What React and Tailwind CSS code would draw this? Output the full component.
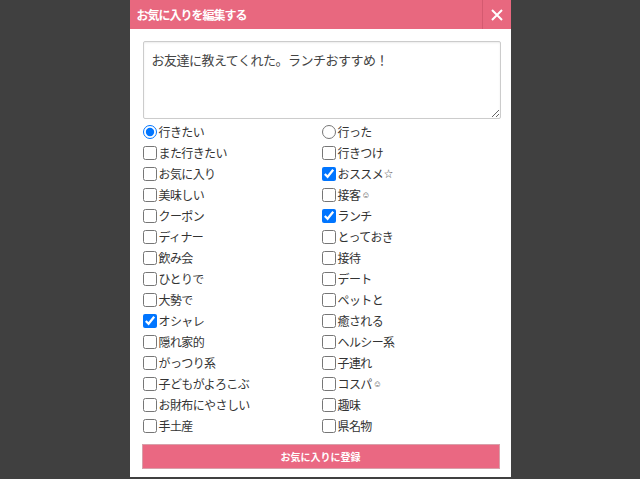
import React from "react";

const left = [
  ["radio", "行きたい", true],
  ["cb", "また行きたい", false],
  ["cb", "お気に入り", false],
  ["cb", "美味しい", false],
  ["cb", "クーポン", false],
  ["cb", "ディナー", false],
  ["cb", "飲み会", false],
  ["cb", "ひとりで", false],
  ["cb", "大勢で", false],
  ["cb", "オシャレ", true],
  ["cb", "隠れ家的", false],
  ["cb", "がっつり系", false],
  ["cb", "子どもがよろこぶ", false],
  ["cb", "お財布にやさしい", false],
  ["cb", "手土産", false],
];
const right = [
  ["radio", "行った", false],
  ["cb", "行きつけ", false],
  ["cb", "おススメ☆", true],
  ["cb", "接客☺", false],
  ["cb", "ランチ", true],
  ["cb", "とっておき", false],
  ["cb", "接待", false],
  ["cb", "デート", false],
  ["cb", "ペットと", false],
  ["cb", "癒される", false],
  ["cb", "ヘルシー系", false],
  ["cb", "子連れ", false],
  ["cb", "コスパ☺", false],
  ["cb", "趣味", false],
  ["cb", "県名物", false],
];

function Item({ type, label, checked }) {
  const isIcon = label.endsWith("☆") || label.endsWith("☺");
  const main = isIcon ? label.slice(0, -1) : label;
  const icon = isIcon ? label.slice(-1) : null;
  return (
    <label className="flex items-center h-[21px] text-[12px] tracking-[-0.6px] text-[#333] leading-none">
      <input
        type={type === "radio" ? "radio" : "checkbox"}
        name={type === "radio" ? "visit" : undefined}
        defaultChecked={checked}
        className="m-0 mr-[2px] w-[14px] h-[14px] shrink-0"
      />
      <span>{main}</span>
      {icon && <span className="text-[9px] ml-px text-[#555]">{icon}</span>}
    </label>
  );
}

export default function App() {
  return (
    <div
      className="w-[640px] h-[479px] bg-[#404040] flex justify-center overflow-hidden"
      style={{ fontFamily: '"Noto Sans CJK JP", "Noto Sans", sans-serif' }}
    >
      <div className="w-[381px] h-[477px] bg-white flex flex-col">
        <div className="h-[29px] bg-[#e8687f] flex items-center">
          <div className="flex-1 pl-[7px] text-white text-[12px] tracking-[-1px] font-bold">お気に入りを編集する</div>
          <div className="w-[29px] h-[29px] border-l border-[#d45a70] flex items-center justify-center">
            <svg width="14" height="14" viewBox="0 0 14 14">
              <path d="M2 2L12 12M12 2L2 12" stroke="white" strokeWidth="2" />
            </svg>
          </div>
        </div>
        <div className="pl-[13px] pr-[10px] pt-[12px]">
          <textarea
            defaultValue="お友達に教えてくれた。ランチおすすめ！"
            className="block w-[358px] h-[78px] border border-[#ccc] rounded-[2px] shadow-[inset_0_1px_2px_rgba(0,0,0,0.08)] px-[8px] py-[9px] text-[13px] tracking-[-0.5px] text-[#444] leading-[18px] resize-y outline-none"
            style={{ fontFamily: '"Noto Sans CJK JP", sans-serif' }}
          />
          <div className="grid grid-cols-2 w-[358px] mt-[2px]">
            <div className="flex flex-col">
              {left.map(([t, l, c]) => (
                <Item key={l} type={t} label={l} checked={c} />
              ))}
            </div>
            <div className="flex flex-col">
              {right.map(([t, l, c]) => (
                <Item key={l} type={t} label={l} checked={c} />
              ))}
            </div>
          </div>
          <button className="mt-[8px] ml-[-1px] w-[358px] h-[25px] bg-[#ea6882] border border-[#d8a0aa] text-white text-[10px] font-bold">
            お気に入りに登録
          </button>
        </div>
      </div>
    </div>
  );
}
